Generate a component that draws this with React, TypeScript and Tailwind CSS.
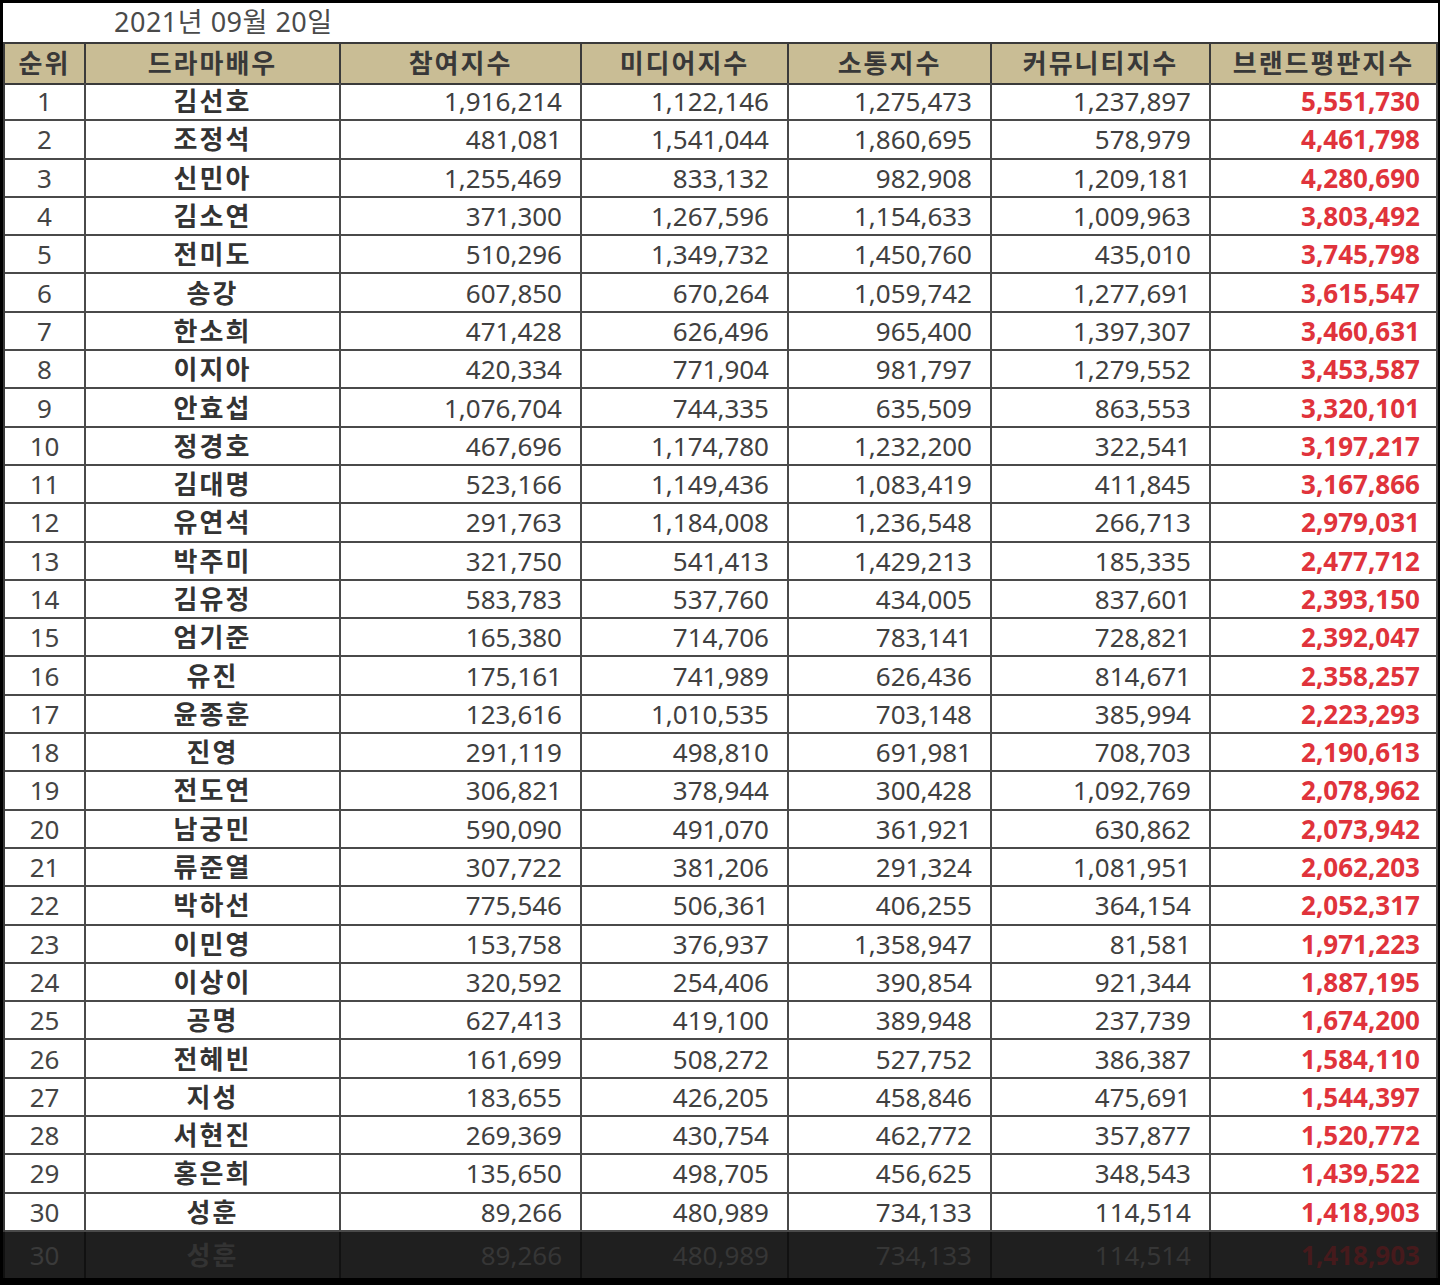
const rows: [number, string, string, string, string, string, string][] = [
  [1, "김선호", "1,916,214", "1,122,146", "1,275,473", "1,237,897", "5,551,730"],
  [2, "조정석", "481,081", "1,541,044", "1,860,695", "578,979", "4,461,798"],
  [3, "신민아", "1,255,469", "833,132", "982,908", "1,209,181", "4,280,690"],
  [4, "김소연", "371,300", "1,267,596", "1,154,633", "1,009,963", "3,803,492"],
  [5, "전미도", "510,296", "1,349,732", "1,450,760", "435,010", "3,745,798"],
  [6, "송강", "607,850", "670,264", "1,059,742", "1,277,691", "3,615,547"],
  [7, "한소희", "471,428", "626,496", "965,400", "1,397,307", "3,460,631"],
  [8, "이지아", "420,334", "771,904", "981,797", "1,279,552", "3,453,587"],
  [9, "안효섭", "1,076,704", "744,335", "635,509", "863,553", "3,320,101"],
  [10, "정경호", "467,696", "1,174,780", "1,232,200", "322,541", "3,197,217"],
  [11, "김대명", "523,166", "1,149,436", "1,083,419", "411,845", "3,167,866"],
  [12, "유연석", "291,763", "1,184,008", "1,236,548", "266,713", "2,979,031"],
  [13, "박주미", "321,750", "541,413", "1,429,213", "185,335", "2,477,712"],
  [14, "김유정", "583,783", "537,760", "434,005", "837,601", "2,393,150"],
  [15, "엄기준", "165,380", "714,706", "783,141", "728,821", "2,392,047"],
  [16, "유진", "175,161", "741,989", "626,436", "814,671", "2,358,257"],
  [17, "윤종훈", "123,616", "1,010,535", "703,148", "385,994", "2,223,293"],
  [18, "진영", "291,119", "498,810", "691,981", "708,703", "2,190,613"],
  [19, "전도연", "306,821", "378,944", "300,428", "1,092,769", "2,078,962"],
  [20, "남궁민", "590,090", "491,070", "361,921", "630,862", "2,073,942"],
  [21, "류준열", "307,722", "381,206", "291,324", "1,081,951", "2,062,203"],
  [22, "박하선", "775,546", "506,361", "406,255", "364,154", "2,052,317"],
  [23, "이민영", "153,758", "376,937", "1,358,947", "81,581", "1,971,223"],
  [24, "이상이", "320,592", "254,406", "390,854", "921,344", "1,887,195"],
  [25, "공명", "627,413", "419,100", "389,948", "237,739", "1,674,200"],
  [26, "전혜빈", "161,699", "508,272", "527,752", "386,387", "1,584,110"],
  [27, "지성", "183,655", "426,205", "458,846", "475,691", "1,544,397"],
  [28, "서현진", "269,369", "430,754", "462,772", "357,877", "1,520,772"],
  [29, "홍은희", "135,650", "498,705", "456,625", "348,543", "1,439,522"],
  [30, "성훈", "89,266", "480,989", "734,133", "114,514", "1,418,903"],
];

const headers = ["순위", "드라마배우", "참여지수", "미디어지수", "소통지수", "커뮤니티지수", "브랜드평판지수"];

const cols = "grid grid-cols-[81px_255px_241px_207px_203px_219px_227px]";
const font = { fontFamily: '"Noto Sans", "Noto Sans CJK KR", sans-serif' };

export default function App() {
  return (
    <div className="w-[1440px] h-[1285px] bg-black pt-[3px] pl-[3px] overflow-hidden" style={font}>
      <div className="w-[1435px] bg-white">
        <div className="h-[39px] flex items-center pl-[111px] text-[27px] text-[#4a4a4a] tracking-[0.5px]">
          2021년 09월 20일
        </div>
        <div className="border-l-2 border-t-2 border-[#3a3a3a]">
          <div className={`${cols} h-[39px] bg-[#c9bd95]`}>
            {headers.map((h) => (
              <div key={h} className="border-r-2 border-b-2 border-[#3a3a3a] flex items-center justify-center text-[26px] font-bold text-[#383838] tracking-[2px]">
                {h}
              </div>
            ))}
          </div>
          {rows.map((r) => (
            <div key={r[0]} className={`${cols} h-[38.3px] text-[26px] leading-none`}>
              <div className="border-r-2 border-b-2 border-[#4a4a4a] flex items-center justify-center text-[#444]">{r[0]}</div>
              <div className="border-r-2 border-b-2 border-[#4a4a4a] flex items-center justify-center font-bold text-[#333] text-[26px] tracking-[2px]">{r[1]}</div>
              {r.slice(2, 6).map((v, i) => (
                <div key={i} className="border-r-2 border-b-2 border-[#4a4a4a] flex items-center justify-end pr-[18px] text-[#404040]">{v}</div>
              ))}
              <div className="border-r-2 border-b-2 border-[#4a4a4a] flex items-center justify-end pr-[16px] font-bold text-[#e0333b]">{r[6]}</div>
            </div>
          ))}
        </div>
      </div>
      <div className={`${cols} w-[1435px] h-[46px] bg-[#1f1f1f] border-l-2 border-[#111] text-[26px] leading-none`}>
        <div className="border-r-2 border-[#111] flex items-center justify-center text-[#3a3a3a]">30</div>
        <div className="border-r-2 border-[#111] flex items-center justify-center font-bold text-[#333] text-[26px] tracking-[2px]">성훈</div>
        {["89,266", "480,989", "734,133", "114,514"].map((v) => (
          <div key={v} className="border-r-2 border-[#111] flex items-center justify-end pr-[18px] text-[#363636]">{v}</div>
        ))}
        <div className="border-r-2 border-[#111] flex items-center justify-end pr-[16px] font-bold text-[#461a1c]">1,418,903</div>
      </div>
    </div>
  );
}
